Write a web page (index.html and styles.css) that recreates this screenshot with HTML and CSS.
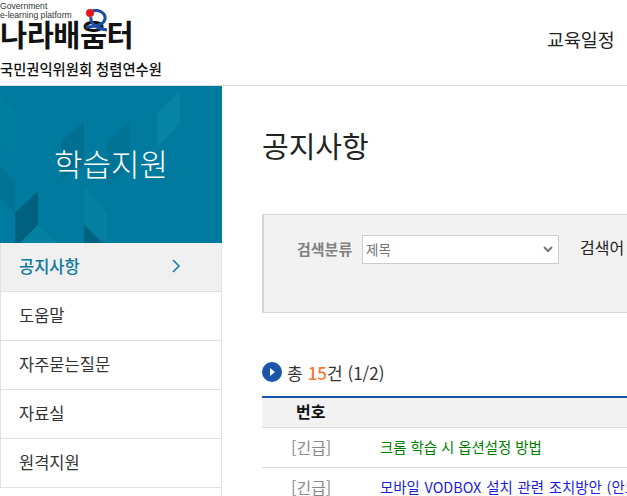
FILE: index.html
```html
<!DOCTYPE html>
<html lang="ko">
<head>
  <meta charset="UTF-8" />
  <title>공지사항 - 나라배움터</title>
  <link rel="stylesheet" href="styles.css">
</head>
<body>

  <header class="top">
    <div class="logo">
      <div class="logo-en">Government<br>e-learning platform</div>
      <div class="logo-name">
        나라배움터
        <svg class="logo-mark" width="30" height="30" viewBox="0 0 30 30">
          <path d="M9 2 C16 0 23 4 22 10 C21 16 11 18 3 18 M8 8 C7 14 12 19 24 21" fill="none" stroke="#1c4fa3" stroke-width="3"/>
          <circle cx="7" cy="4" r="4" fill="#e8141c"/>
        </svg>
      </div>
      <div class="logo-org">국민권익위원회 청렴연수원</div>
    </div>
    <nav class="gnb">교육일정</nav>
  </header>

  <div class="wrap">
    <aside class="side">
      <div class="side-hero">
        <svg class="hero-bg" width="222" height="157" viewBox="0 0 222 157">
          <polygon points="157,28 180,5 180,38 157,62" fill="#0784a4"/>
          <polygon points="61,55 84,36 84,80 61,92" fill="#006f90"/>
          <polygon points="107,55 130,36 130,80 107,100" fill="#007394"/>
          <polygon points="84,100 107,126 107,157 84,139" fill="#0680a1"/>
          <polygon points="15,127 38,105 38,139 20,157 15,157" fill="#00617f"/>
          <polygon points="84,139 102,157 84,157" fill="#00617f"/>
          <polygon points="20,157 38,139 56,157" fill="#0680a1"/>
          <polygon points="0,10 15,24 15,70 0,55" fill="#007e9f"/>
          <polygon points="0,80 15,95 15,127 0,112" fill="#007394"/>
        </svg>
        <span class="hero-title">학습지원</span>
      </div>
      <ul class="side-menu">
        <li class="on">공지사항
          <svg width="10" height="14" viewBox="0 0 10 14"><path d="M2 1 L8 7 L2 13" fill="none" stroke="#0b7a9e" stroke-width="1.500"/></svg>
        </li>
        <li>도움말</li>
        <li>자주묻는질문</li>
        <li>자료실</li>
        <li>원격지원</li>
      </ul>
    </aside>

    <main class="content">
      <h2>공지사항</h2>

      <div class="search-box">
        <label class="search-label">검색분류</label>
        <div class="fake-select">제목
          <svg width="10" height="7" viewBox="0 0 10 7"><path d="M1 1 L5 5 L9 1" fill="none" stroke="#777" stroke-width="2"/></svg>
        </div>
        <label class="search-word">검색어</label>
      </div>

      <div class="total">
        <span class="total-icon"></span>
        총 <b>15</b>건 (1/2)
      </div>

      <table class="list">
        <tr><th>번호</th><th></th></tr>
        <tr>
          <td class="num">[긴급]</td>
          <td class="green">크롬 학습 시 옵션설정 방법</td>
        </tr>
        <tr>
          <td class="num">[긴급]</td>
          <td class="blue">모바일 VODBOX 설치 관련 조치방안 (안드로이드)</td>
        </tr>
      </table>
    </main>
  </div>

</body>
</html>
```

FILE: styles.css
```css
html, body {
  margin: 0;
  height: 496px;
  overflow: hidden;
}
body {
  width: 1200px;
  background-color: white;
  color: #222;
  font-family: "Noto Sans CJK KR", "Noto Sans", sans-serif;
}
.top {
  display: flex;
  height: 85px;
  border-bottom: 1px solid #ddd;
}
.logo {
  width: 547px;
  flex: none;
  color: #111;
}
.logo-en {
  font-family: "Liberation Sans", sans-serif;
  font-size: 8.600px;
  line-height: 9px;
  padding-top: 2px;
  color: #333;
}
.logo-name {
  position: relative;
  width: 134px;
  font-size: 29.500px;
  font-weight: 700;
  line-height: 24px;
  letter-spacing: -0.500px;
  white-space: nowrap;
  margin-top: 1px;
}
.logo-mark {
  position: absolute;
  left: 83px;
  top: -12px;
}
.logo-org {
  font-size: 14.300px;
  font-weight: 500;
  line-height: 18px;
  margin-top: 15px;
  white-space: nowrap;
}
.gnb {
  font-size: 18.400px;
  line-height: 24px;
  padding-top: 27px;
}
.wrap {
  display: flex;
}
.side {
  width: 221px;
  flex: none;
  border-right: 1px solid #e3e3e3;
}
.side-hero {
  position: relative;
  height: 157px;
  background-color: #007a9e;
  display: flex;
  align-items: center;
  justify-content: center;
  margin-right: -1px;
}
.hero-bg {
  position: absolute;
  left: 0;
  top: 0;
}
.hero-title {
  position: relative;
  color: white;
  font-size: 31px;
  font-weight: 300;
  margin-top: -5px;
}
.side-menu {
  list-style: none;
  margin: 0;
  padding: 0;
}
.side-menu li {
  display: flex;
  align-items: center;
  justify-content: space-between;
  padding: 0 40px 2px 18px;
  box-sizing: border-box;
  height: 49px;
  border-bottom: 1px solid #e0e0e0;
  border-left: 1px solid #e0e0e0;
  font-size: 16.500px;
  color: #333;
}
.side-menu li.on {
  background-color: #f0f0f0;
  color: #0b7a9e;
  font-weight: 500;
}
.content {
  padding-left: 40px;
  flex: 1;
}
h2 {
  margin: 0;
  height: 128px;
  font-size: 29px;
  font-weight: 400;
  line-height: 40px;
  padding-top: 39px;
  box-sizing: border-box;
  color: #222;
}
.search-box {
  display: flex;
  align-items: flex-start;
  padding-top: 20px;
  box-sizing: border-box;
  height: 99px;
  background-color: #f2f2f2;
  border: 1px solid #d5d5d5;
  border-left-width: 2px;
}
.search-label {
  margin-left: 33px;
  width: 65px;
  font-size: 15px;
  font-weight: 700;
  line-height: 27px;
  color: #808080;
}
.fake-select {
  display: flex;
  align-items: center;
  justify-content: space-between;
  box-sizing: border-box;
  width: 197px;
  height: 29px;
  padding: 0 5px 1px 3px;
  background-color: white;
  border: 1px solid #ccc;
  font-size: 13.500px;
  color: #777;
}
.search-word {
  margin-left: 21px;
  font-size: 16px;
  line-height: 24px;
  color: #222;
}
.total {
  display: flex;
  align-items: center;
  gap: 5px;
  margin-top: 48px;
  height: 22px;
  font-size: 17px;
  color: #333;
}
.total b {
  color: #f47a30;
  font-weight: 500;
  margin-right: -5px;
}
.total-icon {
  width: 20px;
  height: 20px;
  border-radius: 50%;
  background-color: #1a55a8;
  position: relative;
}
.total-icon::after {
  content: "";
  position: absolute;
  left: 8px;
  top: 6px;
  border-left: 5px solid white;
  border-top: 4px solid transparent;
  border-bottom: 4px solid transparent;
}
.list {
  width: 938px;
  margin-top: 13px;
  border-collapse: collapse;
  border-top: 2px solid #1a55a8;
  table-layout: fixed;
}
.list th {
  height: 30px;
  background-color: #f2f2f2;
  border-bottom: 1px solid #ddd;
  font-size: 16px;
  font-weight: 700;
  line-height: 20px;
  color: #111;
  text-align: left;
  padding: 0 0 2px 34px;
  box-sizing: border-box;
}
.list th:first-child {
  width: 118px;
}
.list td {
  height: 39px;
  padding: 0;
  border-bottom: 1px solid #ddd;
  font-size: 14.400px;
  line-height: 20px;
}
.list .num {
  padding-left: 29px;
  font-size: 16px;
  color: #888;
}
.green { color: green; }
.blue {
  color: #1a1ae0;
  word-spacing: 0.800px;
}
```
